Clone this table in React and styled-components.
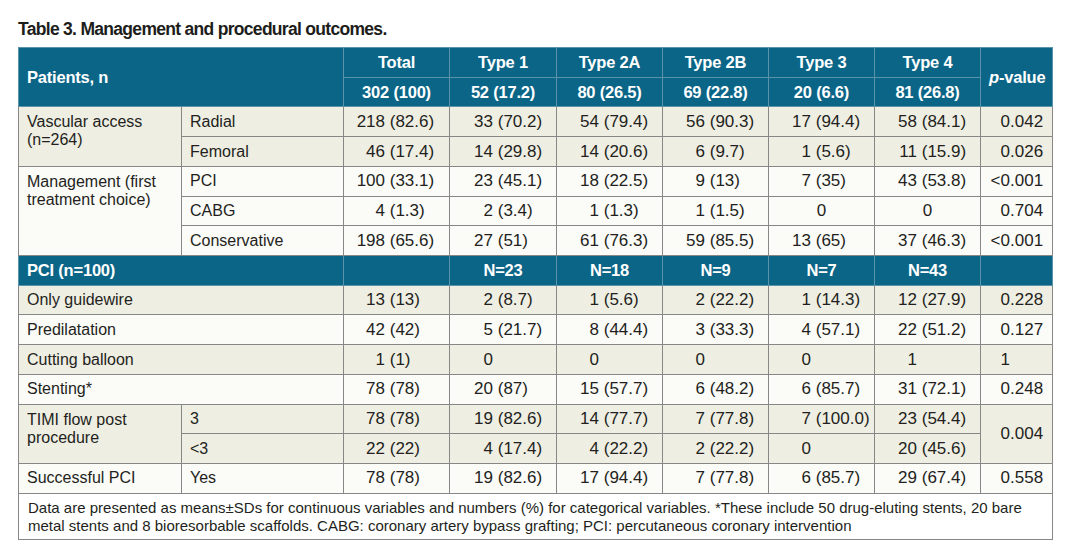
import React from 'react'
import styled, { createGlobalStyle } from 'styled-components'

const GlobalStyle = createGlobalStyle`
  body {
    margin: 0;
    background: #ffffff;
    color: #231f20;
    font-family: "Liberation Sans", Arial, sans-serif;
  }
`

const TEAL = '#0b6587'
const BEIGE = '#efeee3'
const PAPER = '#fbfbf8'
const RULE = '#878787'

const Page = styled.div`
  padding: 18px 0 20px 18px;
  width: 1034px;
`

const Title = styled.h3`
  margin: 0 0 7px;
  font-family: "Liberation Sans", Arial, sans-serif;
  font-weight: 700;
  font-size: 17.5px;
  letter-spacing: -0.7px;
  line-height: 22px;
  color: #1d1d1b;
`

const Table = styled.table`
  border-collapse: collapse;
  table-layout: fixed;
  width: 1034px;
  border: 1px solid #7a7a7a;
  font-size: 16px;
  line-height: 18px;
`

const Row = styled.tr`
  height: 29.73px;
  background: ${p => (p.$tone === 'beige' ? BEIGE : PAPER)};
`

const HeadRow = styled.tr`
  height: 29.73px;
  background: ${TEAL};
`

const HeadCell = styled.th`
  border: 1px solid #5b93ab;
  color: #ffffff;
  font-weight: 700;
  font-size: 16.5px;
  letter-spacing: -0.2px;
  padding: 0 8px;
  text-align: ${p => (p.$left ? 'left' : 'center')};
  vertical-align: middle;
  white-space: nowrap;
`

const Italic = styled.i`
  font-style: italic;
`

const LabelCell = styled.td`
  border: 1px solid ${RULE};
  padding: ${p => (p.$top ? '6px 8px 0 8px' : '0 8px')};
  vertical-align: ${p => (p.$top ? 'top' : 'middle')};
  text-align: left;
`

const NumCell = styled.td`
  border: 1px solid ${RULE};
  padding: 0;
  font-size: 17px;
  vertical-align: middle;
  text-align: ${p => (p.$center ? 'center' : 'left')};
  white-space: nowrap;
`

const Int = styled.span`
  display: inline-block;
  width: ${p => p.$slot}px;
  text-align: right;
`

const NoteCell = styled.td`
  border: 1px solid ${RULE};
  background: #ffffff;
  padding: 5px 9px 4px;
  font-size: 15px;
  line-height: 18px;
`

const NoteLine = styled.div`
  white-space: nowrap;
`

const widths = [163, 162, 106, 107, 106, 106, 106, 106, 72]
const slots = [41, 43, 42, 42, 42, 42]

const Value = ({ v, slot, center }) => {
  if (center) return <NumCell $center>{v}</NumCell>
  const m = v.match(/^([<\d]+)(.*)$/)
  return (
    <NumCell>
      <Int $slot={slot}>{m[1]}</Int>
      {m[2]}
    </NumCell>
  )
}

const Values = ({ vals, centered = [] }) =>
  vals.map((v, i) => (
    <Value key={i} v={v} slot={slots[i]} center={centered.includes(i)} />
  ))

const PValue = ({ v, span }) => {
  const m = v.match(/^([<\d]+)(.*)$/)
  return (
    <NumCell rowSpan={span}>
      <Int $slot={29}>{m[1]}</Int>
      {m[2]}
    </NumCell>
  )
}

export default function App() {
  return (
    <Page>
      <GlobalStyle />
      <Title>Table 3. Management and procedural outcomes.</Title>
      <Table>
        <colgroup>
          {widths.map((w, i) => (
            <col key={i} style={{ width: w }} />
          ))}
        </colgroup>
        <tbody>
          <HeadRow>
            <HeadCell $left colSpan={2} rowSpan={2}>Patients, n</HeadCell>
            <HeadCell>Total</HeadCell>
            <HeadCell>Type 1</HeadCell>
            <HeadCell>Type 2A</HeadCell>
            <HeadCell>Type 2B</HeadCell>
            <HeadCell>Type 3</HeadCell>
            <HeadCell>Type 4</HeadCell>
            <HeadCell rowSpan={2}><Italic>p</Italic>-value</HeadCell>
          </HeadRow>
          <HeadRow>
            <HeadCell>302 (100)</HeadCell>
            <HeadCell>52 (17.2)</HeadCell>
            <HeadCell>80 (26.5)</HeadCell>
            <HeadCell>69 (22.8)</HeadCell>
            <HeadCell>20 (6.6)</HeadCell>
            <HeadCell>81 (26.8)</HeadCell>
          </HeadRow>

          <Row $tone="beige">
            <LabelCell $top rowSpan={2}>Vascular access (n=264)</LabelCell>
            <LabelCell>Radial</LabelCell>
            <Values vals={['218 (82.6)', '33 (70.2)', '54 (79.4)', '56 (90.3)', '17 (94.4)', '58 (84.1)']} />
            <PValue v="0.042" />
          </Row>
          <Row $tone="beige">
            <LabelCell>Femoral</LabelCell>
            <Values vals={['46 (17.4)', '14 (29.8)', '14 (20.6)', '6 (9.7)', '1 (5.6)', '11 (15.9)']} />
            <PValue v="0.026" />
          </Row>

          <Row>
            <LabelCell $top rowSpan={3}>Management (first treatment choice)</LabelCell>
            <LabelCell>PCI</LabelCell>
            <Values vals={['100 (33.1)', '23 (45.1)', '18 (22.5)', '9 (13)', '7 (35)', '43 (53.8)']} />
            <PValue v="<0.001" />
          </Row>
          <Row>
            <LabelCell>CABG</LabelCell>
            <Values vals={['4 (1.3)', '2 (3.4)', '1 (1.3)', '1 (1.5)', '0', '0']} centered={[4, 5]} />
            <PValue v="0.704" />
          </Row>
          <Row>
            <LabelCell>Conservative</LabelCell>
            <Values vals={['198 (65.6)', '27 (51)', '61 (76.3)', '59 (85.5)', '13 (65)', '37 (46.3)']} />
            <PValue v="<0.001" />
          </Row>

          <HeadRow>
            <HeadCell $left colSpan={2}>PCI (n=100)</HeadCell>
            <HeadCell />
            <HeadCell>N=23</HeadCell>
            <HeadCell>N=18</HeadCell>
            <HeadCell>N=9</HeadCell>
            <HeadCell>N=7</HeadCell>
            <HeadCell>N=43</HeadCell>
            <HeadCell />
          </HeadRow>

          <Row $tone="beige">
            <LabelCell colSpan={2}>Only guidewire</LabelCell>
            <Values vals={['13 (13)', '2 (8.7)', '1 (5.6)', '2 (22.2)', '1 (14.3)', '12 (27.9)']} />
            <PValue v="0.228" />
          </Row>
          <Row>
            <LabelCell colSpan={2}>Predilatation</LabelCell>
            <Values vals={['42 (42)', '5 (21.7)', '8 (44.4)', '3 (33.3)', '4 (57.1)', '22 (51.2)']} />
            <PValue v="0.127" />
          </Row>
          <Row $tone="beige">
            <LabelCell colSpan={2}>Cutting balloon</LabelCell>
            <Values vals={['1 (1)', '0', '0', '0', '0', '1']} />
            <PValue v="1" />
          </Row>
          <Row>
            <LabelCell colSpan={2}>Stenting*</LabelCell>
            <Values vals={['78 (78)', '20 (87)', '15 (57.7)', '6 (48.2)', '6 (85.7)', '31 (72.1)']} />
            <PValue v="0.248" />
          </Row>
          <Row $tone="beige">
            <LabelCell $top rowSpan={2}>TIMI flow post procedure</LabelCell>
            <LabelCell>3</LabelCell>
            <Values vals={['78 (78)', '19 (82.6)', '14 (77.7)', '7 (77.8)', '7 (100.0)', '23 (54.4)']} />
            <PValue v="0.004" span={2} />
          </Row>
          <Row $tone="beige">
            <LabelCell>&lt;3</LabelCell>
            <Values vals={['22 (22)', '4 (17.4)', '4 (22.2)', '2 (22.2)', '0', '20 (45.6)']} />
          </Row>
          <Row>
            <LabelCell>Successful PCI</LabelCell>
            <LabelCell>Yes</LabelCell>
            <Values vals={['78 (78)', '19 (82.6)', '17 (94.4)', '7 (77.8)', '6 (85.7)', '29 (67.4)']} />
            <PValue v="0.558" />
          </Row>

          <tr>
            <NoteCell colSpan={9}>
              <NoteLine>
                Data are presented as means±SDs for continuous variables and numbers (%) for categorical variables. *These include 50 drug-eluting stents, 20 bare
              </NoteLine>
              <NoteLine>
                metal stents and 8 bioresorbable scaffolds. CABG: coronary artery bypass grafting; PCI: percutaneous coronary intervention
              </NoteLine>
            </NoteCell>
          </tr>
        </tbody>
      </Table>
    </Page>
  )
}
